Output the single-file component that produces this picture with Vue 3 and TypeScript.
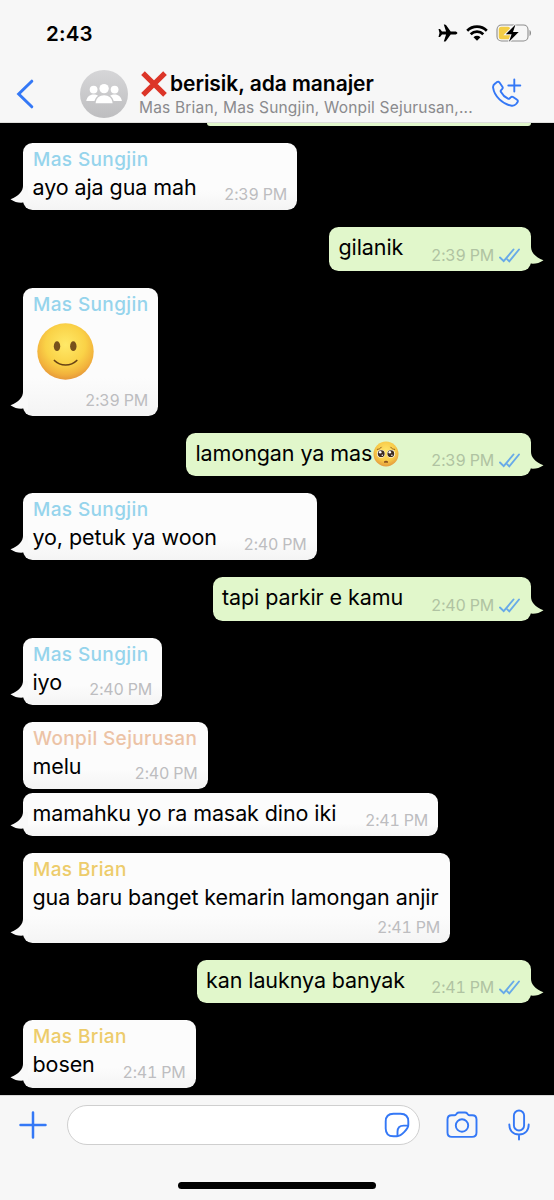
<script setup lang="ts">
interface Message {
  id: number
  text: string
  time: string
  width: number
  height: number
  sender?: string
  tone?: 'sky' | 'peach' | 'gold'
  own?: boolean
  emoji?: 'smile' | 'plead'
  grouped?: boolean
  stacked?: boolean
}

const messages: Message[] = [
  { id: 1, sender: 'Mas Sungjin', tone: 'sky', text: 'ayo aja gua mah', time: '2:39 PM', width: 274, height: 67.5 },
  { id: 2, own: true, text: 'gilanik', time: '2:39 PM', width: 202, height: 43.5 },
  { id: 3, sender: 'Mas Sungjin', tone: 'sky', text: '', emoji: 'smile', time: '2:39 PM', width: 135, height: 128 },
  { id: 4, own: true, text: 'lamongan ya mas', emoji: 'plead', time: '2:39 PM', width: 345, height: 43.5 },
  { id: 5, sender: 'Mas Sungjin', tone: 'sky', text: 'yo, petuk ya woon', time: '2:40 PM', width: 293.5, height: 67.3 },
  { id: 6, own: true, text: 'tapi parkir e kamu', time: '2:40 PM', width: 318.5, height: 43.3 },
  { id: 7, sender: 'Mas Sungjin', tone: 'sky', text: 'iyo', time: '2:40 PM', width: 139, height: 67.3 },
  { id: 8, sender: 'Wonpil Sejurusan', tone: 'peach', text: 'melu', time: '2:40 PM', width: 184.5, height: 67.3 },
  { id: 9, text: 'mamahku yo ra masak dino iki', time: '2:41 PM', width: 415, height: 43.3, grouped: true },
  { id: 10, sender: 'Mas Brian', tone: 'gold', text: 'gua baru banget kemarin lamongan anjir', time: '2:41 PM', width: 427, height: 90, stacked: true },
  { id: 11, own: true, text: 'kan lauknya banyak', time: '2:41 PM', width: 334.5, height: 43.5 },
  { id: 12, sender: 'Mas Brian', tone: 'gold', text: 'bosen', time: '2:41 PM', width: 172.5, height: 67.5 },
]

const hasTail = (m: Message): boolean => m.id !== 8
</script>

<template>
  <div class="phone">
    <header class="top">
      <div class="status">
        <span class="clock">2:43</span>
        <div class="status-icons">
          <svg class="plane" viewBox="0 0 20 18"><path d="M19.400 9c0-.9-1.200-1.500-2.500-1.500h-4.200L8 1.100C7.600.5 7.200.4 6.700.4h-.9l2.300 7.100H4L2 5.100H.5L1.500 9 .5 12.900H2l2-2.400h4.100l-2.300 7.100h.9c.5 0 .9-.1 1.300-.7l4.700-6.400h4.200c1.300 0 2.500-.6 2.500-1.500z" /></svg>
          <svg class="wifi" viewBox="0 0 22 16"><path d="M1.200 5.700a14 14 0 0 1 19.600 0M4.700 9.200a9 9 0 0 1 12.600 0" fill="none" stroke="#000" stroke-width="2.700" /><path d="M11 15.800 7.500 12.300a5 5 0 0 1 7 0z" /></svg>
          <svg class="battery" viewBox="0 0 36 18"><rect x="1" y="1" width="31" height="16" rx="4.500" fill="none" stroke="#8d8d8d" stroke-width="1.100" /><path d="M33.500 6v6c2-.8 2-5.200 0-6z" fill="#8d8d8d" /><rect x="2.800" y="2.800" width="11.500" height="12.400" rx="2.500" fill="#f3cd45" /><path d="M19.500.5 9.800 10.200h5.800l-2.600 7.600L22.700 8h-5.700z" stroke="#f7f7f7" stroke-width="2" paint-order="stroke" /></svg>
        </div>
      </div>
      <div class="bar">
        <svg class="back" viewBox="0 0 20 30"><path d="M16.800 2.200 3.700 15l13.100 12.800" /></svg>
        <svg class="avatar" viewBox="0 0 48 48">
          <defs><linearGradient id="avatar-fill" x1="0" y1="0" x2="0" y2="1"><stop offset="0" stop-color="#d6d6d8" /><stop offset="1" stop-color="#bebec0" /></linearGradient></defs>
          <circle cx="24" cy="24" r="24" fill="url(#avatar-fill)" />
          <g fill="#fff"><circle cx="13.600" cy="19.600" r="3.900" /><circle cx="34.600" cy="19.600" r="3.900" /><path d="M6.300 31c.4-4 3.500-6.600 7.300-6.600 1.800 0 3.300.5 4.500 1.400-1.900 1.300-3 3-3.600 5.200zM41.900 31c-.4-4-3.500-6.600-7.300-6.600-1.800 0-3.300.5-4.500 1.400 1.900 1.300 3 3 3.600 5.200z" /><circle cx="24.100" cy="18.600" r="4.700" /><path d="M15.600 33.200c.4-5.300 3.900-8 8.500-8s8.100 2.700 8.500 8z" /></g>
        </svg>
        <div class="heading">
          <div class="title">
            <svg class="cross" viewBox="0 0 28 28"><path d="M3 3.200 25 24.800M25 3.200 3 24.800" /></svg>
            <span>berisik, ada manajer</span>
          </div>
          <div class="members">Mas Brian, Mas Sungjin, Wonpil Sejurusan,...</div>
        </div>
        <svg class="call" viewBox="0 0 32 32"><path d="M5.300 5.400 7 4.100c.9-.7 1.900-.5 2.500.4l2.900 4.200c.6.900.4 1.700-.3 2.400l-1.200 1.200c-.4.500-.4.900-.1 1.500 1.600 3 4.100 5.400 7.200 6.900.6.300 1.100.2 1.500-.2l1.200-1.200c.7-.7 1.600-.8 2.400-.3l4 2.800c.9.600 1 1.600.3 2.500l-1.300 1.700c-1 1.200-2.300 1.900-4.400 1.700C12.700 26.600 4.300 18.100 3.100 9.600c-.3-1.900.7-3.200 2.200-4.200z" /><path d="M24.300 1.500v12M18.300 7.500h12" /></svg>
      </div>
    </header>

    <main class="chat">
      <div class="previous"></div>
      <div
        v-for="m in messages"
        :key="m.id"
        class="bubble"
        :class="{ own: m.own, grouped: m.grouped, stacked: m.stacked, named: m.sender }"
        :style="{ width: m.width + 'px', height: m.height + 'px' }"
      >
        <svg v-if="hasTail(m)" class="tail" viewBox="0 0 18 20"><path d="M13 0C13 5 9 10 .5 13.300 4.500 16.300 9 17 13.500 16.600L18 18V0z" /></svg>
        <div v-if="m.sender" class="sender" :class="m.tone">{{ m.sender }}</div>
        <div class="content">
          <div class="text">
            <span v-if="m.text">{{ m.text }}</span>
            <svg v-if="m.emoji === 'smile'" class="smile" viewBox="0 0 58 58">
              <defs>
                <radialGradient id="smile-fill" cx=".5" cy=".38" r=".64"><stop offset="0" stop-color="#ffe968" /><stop offset=".55" stop-color="#fad247" /><stop offset=".82" stop-color="#f2b23c" /><stop offset="1" stop-color="#e3923a" /></radialGradient>
              </defs>
              <circle cx="28.500" cy="28.500" r="28.200" fill="url(#smile-fill)" />
              <ellipse cx="20" cy="23.200" rx="3.200" ry="4.900" fill="#76501c" /><ellipse cx="36.300" cy="23.200" rx="3.200" ry="4.900" fill="#76501c" />
              <path d="M17.400 37.500c6 6 16.400 6 22.400 0" fill="none" stroke="#684215" stroke-width="1.700" stroke-linecap="round" />
            </svg>
            <svg v-if="m.emoji === 'plead'" class="plead" viewBox="0 0 26 26">
              <defs>
                <radialGradient id="plead-fill" cx=".5" cy=".38" r=".65"><stop offset="0" stop-color="#ffe76b" /><stop offset=".6" stop-color="#f8ca48" /><stop offset="1" stop-color="#e1933c" /></radialGradient>
              </defs>
              <circle cx="13" cy="13" r="12.500" fill="url(#plead-fill)" />
              <path d="M4.300 8.400c1.700-.1 3.200-.9 4-2.200M21.700 8.400c-1.700-.1-3.200-.9-4-2.200" fill="none" stroke="#96601e" stroke-width="1" stroke-linecap="round" />
              <circle cx="8" cy="12.700" r="3.900" fill="#fff" /><circle cx="18" cy="12.700" r="3.900" fill="#fff" />
              <circle cx="8.200" cy="12.700" r="3.400" fill="#3d2b20" /><circle cx="17.800" cy="12.700" r="3.400" fill="#3d2b20" />
              <circle cx="7.200" cy="11.300" r="1.300" fill="#fff" /><circle cx="16.800" cy="11.300" r="1.300" fill="#fff" />
              <circle cx="9.300" cy="14.200" r=".7" fill="#fff" /><circle cx="18.900" cy="14.200" r=".7" fill="#fff" />
              <path d="M11 21.200c1-1.400 3-1.400 4 0z" fill="#7a421c" stroke="#7a421c" stroke-width=".7" />
            </svg>
          </div>
          <div class="meta">
            <span>{{ m.time }}</span>
            <svg v-if="m.own" class="ticks" viewBox="0 0 21 15"><path d="m1 9.500 3.700 3.700L14.500 1.500M8.300 11.300l2 2L20 1.500" /></svg>
          </div>
        </div>
      </div>
    </main>

    <footer class="composer">
      <div class="controls">
        <svg class="plus" viewBox="0 0 28 28"><path d="M14 1.500v25M1.500 14h25" /></svg>
        <div class="field">
          <svg class="sticker" viewBox="0 0 26 26"><path d="M13 24.300H9.500C4 24.300 1.700 22 1.700 16.500v-7C1.700 4 4 1.700 9.500 1.700h7c5.500 0 7.800 2.300 7.800 7.800V13c0 3.500-6.800 11-11.300 11.300zM13.500 24v-4.200c0-4.500 1.800-6.200 6.200-6.200H24" /></svg>
        </div>
        <svg class="camera" viewBox="0 0 32 28"><path d="M5.800 4.300h2.400c1 0 1.300-.2 1.900-.9l.7-.9c.7-.8 1.200-1 2.200-1h6c1 0 1.500.2 2.200 1l.7.900c.6.700.9.900 1.900.9h2.400c3.100 0 4.300 1.200 4.300 4.300v13c0 3.100-1.200 4.300-4.300 4.300H5.800c-3.100 0-4.300-1.200-4.300-4.300v-13c0-3.100 1.200-4.300 4.300-4.300z" /><circle cx="16" cy="14.500" r="6.200" /></svg>
        <svg class="mic" viewBox="0 0 22 32"><rect x="5.900" y="1.500" width="10.200" height="20" rx="5.100" /><path d="M1.300 15.500c0 6.400 4 10 9.700 10s9.700-3.600 9.700-10M11 25.500v5" /></svg>
      </div>
      <div class="home"></div>
    </footer>
  </div>
</template>

<style>
body {
  margin: 0;
  background: #000;
}
</style>

<style scoped>
.phone {
  width: 554px;
  height: 1200px;
  display: flex;
  flex-direction: column;
  overflow: hidden;
  background: #000;
  font-family: Inter, "Liberation Sans", sans-serif;
}
svg {
  display: block;
  flex: none;
}
.top {
  flex: none;
  height: 123px;
  box-sizing: border-box;
  background: #f7f7f7;
  border-bottom: 1px solid #dededc;
}
.status {
  display: flex;
  justify-content: space-between;
  height: 65px;
  padding: 0 22px 0 46px;
}
.clock {
  margin-top: 20px;
  font-size: 20.500px;
  font-weight: 600;
  line-height: 27px;
  letter-spacing: 0.200px;
}
.status-icons {
  display: flex;
  align-items: center;
  height: 18px;
  margin-top: 24px;
}
.plane {
  width: 20px;
  height: 18px;
}
.wifi {
  width: 22px;
  height: 16px;
  margin-left: 8px;
}
.battery {
  width: 36px;
  height: 18px;
  margin-left: 8px;
}
.bar {
  display: flex;
  align-items: flex-start;
}
.back {
  width: 20px;
  height: 30px;
  margin: 14px 0 0 15px;
  fill: none;
  stroke: #3478f6;
  stroke-width: 3;
  stroke-linecap: round;
}
.avatar {
  width: 48px;
  height: 48px;
  margin: 5px 0 0 45px;
}
.heading {
  width: 345px;
  margin-left: 11px;
  white-space: nowrap;
}
.title {
  display: flex;
  height: 32px;
  font-size: 21px;
  font-weight: 600;
  line-height: 37px;
  letter-spacing: -0.050px;
}
.cross {
  width: 28px;
  height: 28px;
  margin: 5px 2px 0 1px;
  fill: none;
  stroke: #dc3528;
  stroke-width: 5.200;
}
.members {
  font-size: 15.500px;
  line-height: 21px;
  letter-spacing: 0.190px;
  color: #8a8a8d;
}
.call {
  width: 32px;
  height: 32px;
  margin: 13px 0 0 6px;
  fill: none;
  stroke: #3478f6;
  stroke-width: 1.900;
  stroke-linecap: round;
  stroke-linejoin: round;
}
.chat {
  flex: none;
  height: 972px;
  display: flex;
  flex-direction: column;
  align-items: flex-start;
  padding: 0 23px;
  box-sizing: border-box;
}
.previous {
  flex: none;
  align-self: flex-end;
  width: 324px;
  height: 2.500px;
  border-radius: 0 0 9px 9px;
  background: #e1f7cb;
}
.bubble {
  position: relative;
  flex: none;
  display: flex;
  flex-direction: column;
  margin-top: 17px;
  padding: 5px 10px 0;
  box-sizing: border-box;
  border-radius: 9.500px;
  background: linear-gradient(#fcfcfc 70%, #f4f4f4);
}
.bubble.named {
  padding-top: 3px;
}
.bubble.grouped {
  margin-top: 3.500px;
}
.bubble.own {
  align-self: flex-end;
  background: #e1f7cb;
}
.tail {
  position: absolute;
  left: -13px;
  bottom: 4px;
  width: 18px;
  height: 20px;
  fill: #f9f9f9;
}
.own .tail {
  left: auto;
  right: -13px;
  transform: scaleX(-1);
  fill: #e1f7cb;
}
.sender {
  font-size: 19px;
  font-weight: 500;
  line-height: 27px;
  letter-spacing: 0.370px;
  white-space: nowrap;
}
.sky {
  color: #96d4ec;
}
.peach {
  color: #ecc3a6;
}
.gold {
  color: #edcc6b;
}
.content {
  position: relative;
  flex: 1;
  display: flex;
  justify-content: space-between;
}
.text {
  display: flex;
  font-size: 21.500px;
  line-height: 30px;
  letter-spacing: -0.090px;
  white-space: nowrap;
  color: #000;
}
.text span {
  margin-left: -0.500px;
}
.named .text {
  line-height: 28px;
}
.meta {
  display: flex;
  align-self: flex-end;
  margin-bottom: 6px;
  font-size: 16px;
  font-variant-numeric: tabular-nums;
  line-height: 20px;
  letter-spacing: -0.200px;
  white-space: nowrap;
  color: #bdbdc0;
}
.own .meta {
  padding-right: 1px;
  color: #b0c3a2;
}
.stacked .content {
  flex-direction: column;
}
.smile {
  width: 58px;
  height: 58px;
  margin: 5px -54px 0 4px;
}
.plead {
  width: 26px;
  height: 26px;
  margin: 3px 0 0 1px;
}
.ticks {
  width: 21px;
  height: 15px;
  margin: 3px 0 0 5px;
  fill: none;
  stroke: #68aae8;
  stroke-width: 1.900;
  stroke-linecap: round;
}
.composer {
  flex: 1;
  box-sizing: border-box;
  border-top: 1px solid #d8d8d8;
  background: #f7f7f7;
}
.controls {
  display: flex;
  align-items: center;
  height: 40px;
  margin: 9px 24px 0 19px;
}
.controls svg {
  fill: none;
  stroke: #3478f6;
  stroke-width: 1.900;
  stroke-linecap: round;
  stroke-linejoin: round;
}
.controls .plus {
  width: 28px;
  height: 28px;
  stroke-width: 2.500;
}
.field {
  display: flex;
  align-items: center;
  justify-content: flex-end;
  width: 353px;
  height: 40px;
  margin-left: 20px;
  padding-right: 9px;
  box-sizing: border-box;
  border: 1px solid #cfcfcf;
  border-radius: 20px;
  background: #fff;
}
.sticker {
  width: 26px;
  height: 26px;
}
.camera {
  width: 32px;
  height: 28px;
  margin-left: 26px;
}
.mic {
  width: 22px;
  height: 32px;
  margin-left: auto;
}
.home {
  width: 198px;
  height: 7px;
  margin: 37px 0 0 178px;
  border-radius: 4px;
  background: #000;
}
</style>
